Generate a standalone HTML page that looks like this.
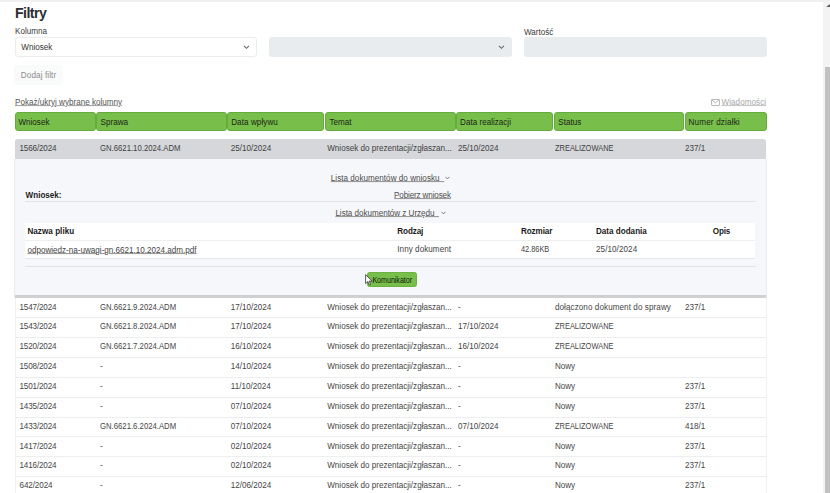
<!DOCTYPE html>
<html><head><meta charset="utf-8"><style>
html,body{margin:0;padding:0;}
body{width:830px;height:493px;overflow:hidden;background:#fff;position:relative;font-family:"Liberation Sans",sans-serif;}
.t{position:absolute;white-space:nowrap;}
.r{position:absolute;}
</style></head><body>
<div class="r" style="left:0.00px;top:0.00px;width:830.00px;height:1.70px;background:#f0f0f0;"></div>
<div class="r" style="left:823.00px;top:1.70px;width:7.00px;height:491.30px;background:#f3f3f3;"></div>
<div class="r" style="left:825.00px;top:67.00px;width:5.00px;height:426.00px;background:#c1c1c1;"></div>
<svg class="r" style="left:825px;top:3px" width="5" height="5" viewBox="0 0 5 5"><path d="M1.2 3.9 L4.4 1.3 L7.6 3.9Z" fill="#606060"/></svg>
<div class="t" style="left:14.90px;top:6px;font-size:14.2px;line-height:14.2px;color:#2b2f33;font-weight:700;letter-spacing:-0.55px;">Filtry</div>
<div class="t" style="left:15.00px;top:28px;font-size:8.1px;line-height:8.1px;color:#3a3a3a;transform:scale(1,1.1);transform-origin:0 6px;">Kolumna</div>
<div class="t" style="left:524.00px;top:29px;font-size:8.1px;line-height:8.1px;color:#3a3a3a;transform:scale(1,1.1);transform-origin:0 6px;">Wartość</div>
<div class="r" style="left:14.50px;top:37.00px;width:242.50px;height:19.50px;background:#fff;border:1px solid #ebecee;border-radius:3px;box-sizing:border-box;"></div>
<div class="t" style="left:21.30px;top:44px;font-size:8.1px;line-height:8.1px;color:#333;transform:scale(1,1.1);transform-origin:0 6px;">Wniosek</div>
<svg class="r" style="left:243px;top:44.6px" width="7" height="5" viewBox="0 0 7 5"><path d="M0.9 0.8 L3.4 3.3 L5.9 0.8" fill="none" stroke="#666" stroke-width="1.05"/></svg>
<div class="r" style="left:269.00px;top:37.00px;width:242.70px;height:19.50px;background:#e9ecef;border-radius:3px;"></div>
<svg class="r" style="left:497.6px;top:44.6px" width="7" height="5" viewBox="0 0 7 5"><path d="M0.9 0.8 L3.4 3.3 L5.9 0.8" fill="none" stroke="#666" stroke-width="1.05"/></svg>
<div class="r" style="left:524.00px;top:37.00px;width:243.00px;height:19.50px;background:#e9ecef;border-radius:3px;"></div>
<div class="r" style="left:13.80px;top:64.50px;width:49.20px;height:20.50px;background:#f9fafa;border-radius:3px;"></div>
<div class="t" style="left:20.80px;top:72px;font-size:8.1px;line-height:8.1px;color:#8c8c8c;letter-spacing:0.12px;transform:scale(1,1.1);transform-origin:0 6px;">Dodaj filtr</div>
<div class="t" style="left:15.00px;top:99px;font-size:8.1px;line-height:8.1px;color:#555;transform:scale(1,1.1);transform-origin:0 6px;text-decoration:underline;text-decoration-color:#a5a5a5;text-underline-offset:0px;text-decoration-thickness:0.9px;">Pokaż/ukryj wybrane kolumny</div>
<svg class="r" style="left:711px;top:99px" width="9" height="7" viewBox="0 0 9 7"><rect x="0.5" y="0.5" width="8" height="6" rx="0.6" fill="none" stroke="#b0b0b0" stroke-width="0.9"/><path d="M0.8 0.9 L4.5 3.9 L8.2 0.9" fill="none" stroke="#b0b0b0" stroke-width="0.9"/></svg>
<div class="t" style="left:721.50px;top:99px;font-size:8.1px;line-height:8.1px;color:#a8a8a8;letter-spacing:0.05px;transform:scale(1,1.1);transform-origin:0 6px;text-decoration:underline;text-decoration-color:#c8c8c8;text-underline-offset:0px;text-decoration-thickness:0.9px;">Wiadomości</div>
<div class="r" style="left:14.60px;top:112.00px;width:81.15px;height:19.00px;background:#77be4b;border:1px solid #64ac3c;border-radius:3px;box-sizing:border-box;"></div>
<div class="t" style="left:18.40px;top:119px;font-size:8.1px;line-height:8.1px;color:#1b2616;letter-spacing:0px;transform:scale(1,1.1);transform-origin:0 6px;">Wniosek</div>
<div class="r" style="left:96.25px;top:112.00px;width:130.50px;height:19.00px;background:#77be4b;border:1px solid #64ac3c;border-radius:3px;box-sizing:border-box;"></div>
<div class="t" style="left:100.60px;top:119px;font-size:8.1px;line-height:8.1px;color:#1b2616;letter-spacing:0px;transform:scale(1,1.1);transform-origin:0 6px;">Sprawa</div>
<div class="r" style="left:227.25px;top:112.00px;width:97.00px;height:19.00px;background:#77be4b;border:1px solid #64ac3c;border-radius:3px;box-sizing:border-box;"></div>
<div class="t" style="left:231.20px;top:119px;font-size:8.1px;line-height:8.1px;color:#1b2616;letter-spacing:0.08px;transform:scale(1,1.1);transform-origin:0 6px;">Data wpływu</div>
<div class="r" style="left:324.75px;top:112.00px;width:131.00px;height:19.00px;background:#77be4b;border:1px solid #64ac3c;border-radius:3px;box-sizing:border-box;"></div>
<div class="t" style="left:329.40px;top:119px;font-size:8.1px;line-height:8.1px;color:#1b2616;letter-spacing:0px;transform:scale(1,1.1);transform-origin:0 6px;">Temat</div>
<div class="r" style="left:456.25px;top:112.00px;width:97.00px;height:19.00px;background:#77be4b;border:1px solid #64ac3c;border-radius:3px;box-sizing:border-box;"></div>
<div class="t" style="left:460.10px;top:119px;font-size:8.1px;line-height:8.1px;color:#1b2616;letter-spacing:0px;transform:scale(1,1.1);transform-origin:0 6px;">Data realizacji</div>
<div class="r" style="left:553.75px;top:112.00px;width:130.50px;height:19.00px;background:#77be4b;border:1px solid #64ac3c;border-radius:3px;box-sizing:border-box;"></div>
<div class="t" style="left:558.30px;top:119px;font-size:8.1px;line-height:8.1px;color:#1b2616;letter-spacing:0px;transform:scale(1,1.1);transform-origin:0 6px;">Status</div>
<div class="r" style="left:684.75px;top:112.00px;width:81.75px;height:19.00px;background:#77be4b;border:1px solid #64ac3c;border-radius:3px;box-sizing:border-box;"></div>
<div class="t" style="left:688.60px;top:119px;font-size:8.1px;line-height:8.1px;color:#1b2616;letter-spacing:0.17px;transform:scale(1,1.1);transform-origin:0 6px;">Numer działki</div>
<div class="r" style="left:14.70px;top:139.05px;width:751.50px;height:19.65px;background:#d5d7da;border-radius:3px 3px 0 0;"></div>
<div class="t" style="left:19.50px;top:145px;font-size:8.1px;line-height:8.1px;color:#424242;letter-spacing:-0.15px;transform:scale(1,1.1);transform-origin:0 6px;">1566/2024</div>
<div class="t" style="left:100.10px;top:145px;font-size:8.1px;line-height:8.1px;color:#424242;transform:scale(0.956,1.1);transform-origin:0 6px;">GN.6621.10.2024.ADM</div>
<div class="t" style="left:230.80px;top:145px;font-size:8.1px;line-height:8.1px;color:#424242;transform:scale(1,1.1);transform-origin:0 6px;">25/10/2024</div>
<div class="t" style="left:327.20px;top:145px;font-size:8.1px;line-height:8.1px;color:#424242;transform:scale(1,1.1);transform-origin:0 6px;">Wniosek do prezentacji/zgłaszan...</div>
<div class="t" style="left:458.10px;top:145px;font-size:8.1px;line-height:8.1px;color:#424242;transform:scale(1,1.1);transform-origin:0 6px;">25/10/2024</div>
<div class="t" style="left:554.90px;top:145px;font-size:8.1px;line-height:8.1px;color:#424242;transform:scale(0.92,1.1);transform-origin:0 6px;">ZREALIZOWANE</div>
<div class="t" style="left:684.90px;top:145px;font-size:8.1px;line-height:8.1px;color:#424242;transform:scale(1,1.1);transform-origin:0 6px;">237/1</div>
<div class="r" style="left:14.00px;top:158.70px;width:752.50px;height:139.30px;background:#f6f7fa;border-left:1px solid #e9ebee;border-right:1px solid #e9ebee;box-sizing:border-box;"></div>
<div class="r" style="left:15.00px;top:295.30px;width:751.00px;height:2.60px;background:#cfd0d2;"></div>
<div class="t" style="left:330.80px;top:175px;font-size:8.1px;line-height:8.1px;color:#4d4d4d;letter-spacing:0.03px;transform:scale(1,1.1);transform-origin:0 6px;text-decoration:underline;text-decoration-color:#9a9a9a;text-underline-offset:0px;text-decoration-thickness:0.9px;">Lista dokumentów do wniosku&nbsp;&nbsp;</div>
<svg class="r" style="left:445px;top:176.3px" width="5" height="4" viewBox="0 0 5 4"><path d="M0.5 0.8 L2.5 2.9 L4.5 0.8" fill="none" stroke="#777" stroke-width="0.95"/></svg>
<div class="t" style="left:25.60px;top:192px;font-size:8.1px;line-height:8.1px;color:#222;font-weight:700;transform:scale(1,1.1);transform-origin:0 6px;">Wniosek:</div>
<div class="t" style="left:394.10px;top:192px;font-size:8.1px;line-height:8.1px;color:#4d4d4d;letter-spacing:-0.15px;transform:scale(1,1.1);transform-origin:0 6px;text-decoration:underline;text-decoration-color:#9a9a9a;text-underline-offset:0px;text-decoration-thickness:0.9px;">Pobierz wniosek</div>
<div class="r" style="left:25.00px;top:201.00px;width:731.00px;height:1.00px;background:#e2e3e5;"></div>
<div class="t" style="left:335.40px;top:210px;font-size:8.1px;line-height:8.1px;color:#4d4d4d;letter-spacing:-0.03px;transform:scale(1,1.1);transform-origin:0 6px;text-decoration:underline;text-decoration-color:#9a9a9a;text-underline-offset:0px;text-decoration-thickness:0.9px;">Lista dokumentów z Urzędu&nbsp;&nbsp;</div>
<svg class="r" style="left:440.5px;top:210.9px" width="5" height="4" viewBox="0 0 5 4"><path d="M0.5 0.8 L2.5 2.9 L4.5 0.8" fill="none" stroke="#777" stroke-width="0.95"/></svg>
<div class="r" style="left:25.20px;top:223.30px;width:730.30px;height:34.80px;background:#ffffff;"></div>
<div class="r" style="left:25.20px;top:240.40px;width:730.30px;height:0.80px;background:#eceef0;"></div>
<div class="r" style="left:25.20px;top:257.60px;width:730.30px;height:0.80px;background:#e4e6e8;"></div>
<div class="t" style="left:27.40px;top:228px;font-size:8.1px;line-height:8.1px;color:#1a1a1a;font-weight:700;letter-spacing:0.05px;transform:scale(1,1.1);transform-origin:0 6px;">Nazwa pliku</div>
<div class="t" style="left:397.30px;top:228px;font-size:8.1px;line-height:8.1px;color:#1a1a1a;font-weight:700;letter-spacing:-0.1px;transform:scale(1,1.1);transform-origin:0 6px;">Rodzaj</div>
<div class="t" style="left:521.00px;top:228px;font-size:8.1px;line-height:8.1px;color:#1a1a1a;font-weight:700;letter-spacing:-0.1px;transform:scale(1,1.1);transform-origin:0 6px;">Rozmiar</div>
<div class="t" style="left:596.00px;top:228px;font-size:8.1px;line-height:8.1px;color:#1a1a1a;font-weight:700;letter-spacing:0px;transform:scale(1,1.1);transform-origin:0 6px;">Data dodania</div>
<div class="t" style="left:712.80px;top:228px;font-size:8.1px;line-height:8.1px;color:#1a1a1a;font-weight:700;letter-spacing:-0.15px;transform:scale(1,1.1);transform-origin:0 6px;">Opis</div>
<div class="t" style="left:27.40px;top:247px;font-size:8.1px;line-height:8.1px;color:#444;transform:scale(1,1.1);transform-origin:0 6px;text-decoration:underline;text-decoration-color:#9a9a9a;text-underline-offset:0px;text-decoration-thickness:0.9px;">odpowiedz-na-uwagi-gn.6621.10.2024.adm.pdf</div>
<div class="t" style="left:397.30px;top:246px;font-size:8.1px;line-height:8.1px;color:#444;letter-spacing:0.05px;transform:scale(1,1.1);transform-origin:0 6px;">Inny dokument</div>
<div class="t" style="left:521.00px;top:246px;font-size:8.1px;line-height:8.1px;color:#444;transform:scale(0.91,1.1);transform-origin:0 6px;">42.86KB</div>
<div class="t" style="left:596.00px;top:246px;font-size:8.1px;line-height:8.1px;color:#444;letter-spacing:0.07px;transform:scale(1,1.1);transform-origin:0 6px;">25/10/2024</div>
<div class="r" style="left:25.00px;top:266.30px;width:731.00px;height:1.00px;background:#e2e3e5;"></div>
<div class="r" style="left:367.30px;top:271.80px;width:49.70px;height:15.20px;background:#77be4b;border:1px solid #6ab341;border-radius:2.5px;box-sizing:border-box;"></div>
<div class="t" style="left:372.40px;top:278px;font-size:7.16px;line-height:7.16px;color:#0f1a0a;letter-spacing:-0.05px;transform:scale(1,1.15);transform-origin:0 5px;">Komunikator</div>
<svg class="r" style="left:365px;top:274px" width="8" height="12" viewBox="0 0 8 12"><path d="M0.6 0.6 L0.6 9.6 L2.8 7.6 L4.3 11 L5.6 10.4 L4.2 7.1 L7.2 7.1 Z" fill="#fff" stroke="#333" stroke-width="0.8"/></svg>
<div class="r" style="left:14.50px;top:298.00px;width:1.00px;height:195.00px;background:#eef0f2;"></div>
<div class="r" style="left:765.50px;top:298.00px;width:1.00px;height:195.00px;background:#eef0f2;"></div>
<div class="t" style="left:19.50px;top:304px;font-size:8.1px;line-height:8.1px;color:#464646;letter-spacing:-0.15px;transform:scale(1,1.1);transform-origin:0 6px;">1547/2024</div>
<div class="t" style="left:100.10px;top:304px;font-size:8.1px;line-height:8.1px;color:#464646;transform:scale(0.956,1.1);transform-origin:0 6px;">GN.6621.9.2024.ADM</div>
<div class="t" style="left:230.80px;top:304px;font-size:8.1px;line-height:8.1px;color:#464646;transform:scale(1,1.1);transform-origin:0 6px;">17/10/2024</div>
<div class="t" style="left:327.20px;top:304px;font-size:8.1px;line-height:8.1px;color:#464646;transform:scale(1,1.1);transform-origin:0 6px;">Wniosek do prezentacji/zgłaszan...</div>
<div class="t" style="left:458.10px;top:304px;font-size:8.1px;line-height:8.1px;color:#464646;transform:scale(1,1.1);transform-origin:0 6px;">-</div>
<div class="t" style="left:554.90px;top:304px;font-size:8.1px;line-height:8.1px;color:#464646;letter-spacing:0.08px;transform:scale(1,1.1);transform-origin:0 6px;">dołączono dokument do sprawy</div>
<div class="t" style="left:684.90px;top:304px;font-size:8.1px;line-height:8.1px;color:#464646;transform:scale(1,1.1);transform-origin:0 6px;">237/1</div>
<div class="r" style="left:15.00px;top:317.26px;width:751.00px;height:1.00px;background:#eceef0;"></div>
<div class="t" style="left:19.50px;top:323px;font-size:8.1px;line-height:8.1px;color:#464646;letter-spacing:-0.15px;transform:scale(1,1.1);transform-origin:0 6px;">1543/2024</div>
<div class="t" style="left:100.10px;top:323px;font-size:8.1px;line-height:8.1px;color:#464646;transform:scale(0.956,1.1);transform-origin:0 6px;">GN.6621.8.2024.ADM</div>
<div class="t" style="left:230.80px;top:323px;font-size:8.1px;line-height:8.1px;color:#464646;transform:scale(1,1.1);transform-origin:0 6px;">17/10/2024</div>
<div class="t" style="left:327.20px;top:323px;font-size:8.1px;line-height:8.1px;color:#464646;transform:scale(1,1.1);transform-origin:0 6px;">Wniosek do prezentacji/zgłaszan...</div>
<div class="t" style="left:458.10px;top:323px;font-size:8.1px;line-height:8.1px;color:#464646;transform:scale(1,1.1);transform-origin:0 6px;">17/10/2024</div>
<div class="t" style="left:554.90px;top:323px;font-size:8.1px;line-height:8.1px;color:#464646;transform:scale(0.92,1.1);transform-origin:0 6px;">ZREALIZOWANE</div>
<div class="r" style="left:15.00px;top:337.12px;width:751.00px;height:1.00px;background:#eceef0;"></div>
<div class="t" style="left:19.50px;top:343px;font-size:8.1px;line-height:8.1px;color:#464646;letter-spacing:-0.15px;transform:scale(1,1.1);transform-origin:0 6px;">1520/2024</div>
<div class="t" style="left:100.10px;top:343px;font-size:8.1px;line-height:8.1px;color:#464646;transform:scale(0.956,1.1);transform-origin:0 6px;">GN.6621.7.2024.ADM</div>
<div class="t" style="left:230.80px;top:343px;font-size:8.1px;line-height:8.1px;color:#464646;transform:scale(1,1.1);transform-origin:0 6px;">16/10/2024</div>
<div class="t" style="left:327.20px;top:343px;font-size:8.1px;line-height:8.1px;color:#464646;transform:scale(1,1.1);transform-origin:0 6px;">Wniosek do prezentacji/zgłaszan...</div>
<div class="t" style="left:458.10px;top:343px;font-size:8.1px;line-height:8.1px;color:#464646;transform:scale(1,1.1);transform-origin:0 6px;">16/10/2024</div>
<div class="t" style="left:554.90px;top:343px;font-size:8.1px;line-height:8.1px;color:#464646;transform:scale(0.92,1.1);transform-origin:0 6px;">ZREALIZOWANE</div>
<div class="r" style="left:15.00px;top:356.98px;width:751.00px;height:1.00px;background:#eceef0;"></div>
<div class="t" style="left:19.50px;top:363px;font-size:8.1px;line-height:8.1px;color:#464646;letter-spacing:-0.15px;transform:scale(1,1.1);transform-origin:0 6px;">1508/2024</div>
<div class="t" style="left:100.10px;top:363px;font-size:8.1px;line-height:8.1px;color:#464646;transform:scale(1,1.1);transform-origin:0 6px;">-</div>
<div class="t" style="left:230.80px;top:363px;font-size:8.1px;line-height:8.1px;color:#464646;transform:scale(1,1.1);transform-origin:0 6px;">14/10/2024</div>
<div class="t" style="left:327.20px;top:363px;font-size:8.1px;line-height:8.1px;color:#464646;transform:scale(1,1.1);transform-origin:0 6px;">Wniosek do prezentacji/zgłaszan...</div>
<div class="t" style="left:458.10px;top:363px;font-size:8.1px;line-height:8.1px;color:#464646;transform:scale(1,1.1);transform-origin:0 6px;">-</div>
<div class="t" style="left:554.90px;top:363px;font-size:8.1px;line-height:8.1px;color:#464646;transform:scale(1,1.1);transform-origin:0 6px;">Nowy</div>
<div class="r" style="left:15.00px;top:376.84px;width:751.00px;height:1.00px;background:#eceef0;"></div>
<div class="t" style="left:19.50px;top:383px;font-size:8.1px;line-height:8.1px;color:#464646;letter-spacing:-0.15px;transform:scale(1,1.1);transform-origin:0 6px;">1501/2024</div>
<div class="t" style="left:100.10px;top:383px;font-size:8.1px;line-height:8.1px;color:#464646;transform:scale(1,1.1);transform-origin:0 6px;">-</div>
<div class="t" style="left:230.80px;top:383px;font-size:8.1px;line-height:8.1px;color:#464646;transform:scale(1,1.1);transform-origin:0 6px;">11/10/2024</div>
<div class="t" style="left:327.20px;top:383px;font-size:8.1px;line-height:8.1px;color:#464646;transform:scale(1,1.1);transform-origin:0 6px;">Wniosek do prezentacji/zgłaszan...</div>
<div class="t" style="left:458.10px;top:383px;font-size:8.1px;line-height:8.1px;color:#464646;transform:scale(1,1.1);transform-origin:0 6px;">-</div>
<div class="t" style="left:554.90px;top:383px;font-size:8.1px;line-height:8.1px;color:#464646;transform:scale(1,1.1);transform-origin:0 6px;">Nowy</div>
<div class="t" style="left:684.90px;top:383px;font-size:8.1px;line-height:8.1px;color:#464646;transform:scale(1,1.1);transform-origin:0 6px;">237/1</div>
<div class="r" style="left:15.00px;top:396.70px;width:751.00px;height:1.00px;background:#eceef0;"></div>
<div class="t" style="left:19.50px;top:403px;font-size:8.1px;line-height:8.1px;color:#464646;letter-spacing:-0.15px;transform:scale(1,1.1);transform-origin:0 6px;">1435/2024</div>
<div class="t" style="left:100.10px;top:403px;font-size:8.1px;line-height:8.1px;color:#464646;transform:scale(1,1.1);transform-origin:0 6px;">-</div>
<div class="t" style="left:230.80px;top:403px;font-size:8.1px;line-height:8.1px;color:#464646;transform:scale(1,1.1);transform-origin:0 6px;">07/10/2024</div>
<div class="t" style="left:327.20px;top:403px;font-size:8.1px;line-height:8.1px;color:#464646;transform:scale(1,1.1);transform-origin:0 6px;">Wniosek do prezentacji/zgłaszan...</div>
<div class="t" style="left:458.10px;top:403px;font-size:8.1px;line-height:8.1px;color:#464646;transform:scale(1,1.1);transform-origin:0 6px;">-</div>
<div class="t" style="left:554.90px;top:403px;font-size:8.1px;line-height:8.1px;color:#464646;transform:scale(1,1.1);transform-origin:0 6px;">Nowy</div>
<div class="t" style="left:684.90px;top:403px;font-size:8.1px;line-height:8.1px;color:#464646;transform:scale(1,1.1);transform-origin:0 6px;">237/1</div>
<div class="r" style="left:15.00px;top:416.56px;width:751.00px;height:1.00px;background:#eceef0;"></div>
<div class="t" style="left:19.50px;top:423px;font-size:8.1px;line-height:8.1px;color:#464646;letter-spacing:-0.15px;transform:scale(1,1.1);transform-origin:0 6px;">1433/2024</div>
<div class="t" style="left:100.10px;top:423px;font-size:8.1px;line-height:8.1px;color:#464646;transform:scale(0.956,1.1);transform-origin:0 6px;">GN.6621.6.2024.ADM</div>
<div class="t" style="left:230.80px;top:423px;font-size:8.1px;line-height:8.1px;color:#464646;transform:scale(1,1.1);transform-origin:0 6px;">07/10/2024</div>
<div class="t" style="left:327.20px;top:423px;font-size:8.1px;line-height:8.1px;color:#464646;transform:scale(1,1.1);transform-origin:0 6px;">Wniosek do prezentacji/zgłaszan...</div>
<div class="t" style="left:458.10px;top:423px;font-size:8.1px;line-height:8.1px;color:#464646;transform:scale(1,1.1);transform-origin:0 6px;">07/10/2024</div>
<div class="t" style="left:554.90px;top:423px;font-size:8.1px;line-height:8.1px;color:#464646;transform:scale(0.92,1.1);transform-origin:0 6px;">ZREALIZOWANE</div>
<div class="t" style="left:684.90px;top:423px;font-size:8.1px;line-height:8.1px;color:#464646;transform:scale(1,1.1);transform-origin:0 6px;">418/1</div>
<div class="r" style="left:15.00px;top:436.42px;width:751.00px;height:1.00px;background:#eceef0;"></div>
<div class="t" style="left:19.50px;top:443px;font-size:8.1px;line-height:8.1px;color:#464646;letter-spacing:-0.15px;transform:scale(1,1.1);transform-origin:0 6px;">1417/2024</div>
<div class="t" style="left:100.10px;top:443px;font-size:8.1px;line-height:8.1px;color:#464646;transform:scale(1,1.1);transform-origin:0 6px;">-</div>
<div class="t" style="left:230.80px;top:443px;font-size:8.1px;line-height:8.1px;color:#464646;transform:scale(1,1.1);transform-origin:0 6px;">02/10/2024</div>
<div class="t" style="left:327.20px;top:443px;font-size:8.1px;line-height:8.1px;color:#464646;transform:scale(1,1.1);transform-origin:0 6px;">Wniosek do prezentacji/zgłaszan...</div>
<div class="t" style="left:458.10px;top:443px;font-size:8.1px;line-height:8.1px;color:#464646;transform:scale(1,1.1);transform-origin:0 6px;">-</div>
<div class="t" style="left:554.90px;top:443px;font-size:8.1px;line-height:8.1px;color:#464646;transform:scale(1,1.1);transform-origin:0 6px;">Nowy</div>
<div class="t" style="left:684.90px;top:443px;font-size:8.1px;line-height:8.1px;color:#464646;transform:scale(1,1.1);transform-origin:0 6px;">237/1</div>
<div class="r" style="left:15.00px;top:456.28px;width:751.00px;height:1.00px;background:#eceef0;"></div>
<div class="t" style="left:19.50px;top:462px;font-size:8.1px;line-height:8.1px;color:#464646;letter-spacing:-0.15px;transform:scale(1,1.1);transform-origin:0 6px;">1416/2024</div>
<div class="t" style="left:100.10px;top:462px;font-size:8.1px;line-height:8.1px;color:#464646;transform:scale(1,1.1);transform-origin:0 6px;">-</div>
<div class="t" style="left:230.80px;top:462px;font-size:8.1px;line-height:8.1px;color:#464646;transform:scale(1,1.1);transform-origin:0 6px;">02/10/2024</div>
<div class="t" style="left:327.20px;top:462px;font-size:8.1px;line-height:8.1px;color:#464646;transform:scale(1,1.1);transform-origin:0 6px;">Wniosek do prezentacji/zgłaszan...</div>
<div class="t" style="left:458.10px;top:462px;font-size:8.1px;line-height:8.1px;color:#464646;transform:scale(1,1.1);transform-origin:0 6px;">-</div>
<div class="t" style="left:554.90px;top:462px;font-size:8.1px;line-height:8.1px;color:#464646;transform:scale(1,1.1);transform-origin:0 6px;">Nowy</div>
<div class="t" style="left:684.90px;top:462px;font-size:8.1px;line-height:8.1px;color:#464646;transform:scale(1,1.1);transform-origin:0 6px;">237/1</div>
<div class="r" style="left:15.00px;top:476.14px;width:751.00px;height:1.00px;background:#eceef0;"></div>
<div class="t" style="left:19.50px;top:482px;font-size:8.1px;line-height:8.1px;color:#464646;letter-spacing:-0.1px;transform:scale(1,1.1);transform-origin:0 6px;">642/2024</div>
<div class="t" style="left:100.10px;top:482px;font-size:8.1px;line-height:8.1px;color:#464646;transform:scale(1,1.1);transform-origin:0 6px;">-</div>
<div class="t" style="left:230.80px;top:482px;font-size:8.1px;line-height:8.1px;color:#464646;transform:scale(1,1.1);transform-origin:0 6px;">12/06/2024</div>
<div class="t" style="left:327.20px;top:482px;font-size:8.1px;line-height:8.1px;color:#464646;transform:scale(1,1.1);transform-origin:0 6px;">Wniosek do prezentacji/zgłaszan...</div>
<div class="t" style="left:458.10px;top:482px;font-size:8.1px;line-height:8.1px;color:#464646;transform:scale(1,1.1);transform-origin:0 6px;">-</div>
<div class="t" style="left:554.90px;top:482px;font-size:8.1px;line-height:8.1px;color:#464646;transform:scale(1,1.1);transform-origin:0 6px;">Nowy</div>
<div class="t" style="left:684.90px;top:482px;font-size:8.1px;line-height:8.1px;color:#464646;transform:scale(1,1.1);transform-origin:0 6px;">237/1</div>
<div class="r" style="left:15.00px;top:496.00px;width:751.00px;height:1.00px;background:#eceef0;"></div>

</body></html>
